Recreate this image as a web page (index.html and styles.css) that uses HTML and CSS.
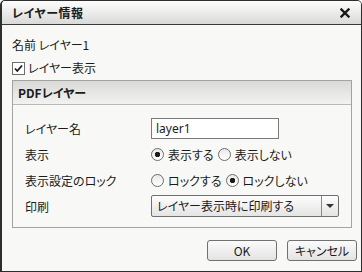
FILE: index.html
```html
<!DOCTYPE html>
<html lang="ja">
<head>
    <meta charset="UTF-8">
    <title>レイヤー情報</title>
    <link rel="stylesheet" href="styles.css">
</head>
<body>
    <div class="dialog">
        <div class="titlebar">
            <span class="title">レイヤー情報</span>
            <svg class="close" width="10" height="10" viewBox="0 0 10 10">
                <path d="M1.5 1.5 L8.5 8.5 M8.5 1.5 L1.5 8.5" stroke="#1a1a1a" stroke-width="2.4" stroke-linecap="square"/>
            </svg>
        </div>

        <div class="content">
            <div class="info-line">名前 レイヤー1</div>
            <label class="info-line check-line">
                <svg class="checkbox" width="13" height="13" viewBox="0 0 13 13">
                    <rect x="0.5" y="0.5" width="12" height="12" fill="#ffffff" stroke="#6f6f6f"/>
                    <path d="M3 6.5 L5.3 9 L10 3.5" fill="none" stroke="#1a1a1a" stroke-width="1.8"/>
                </svg>
                レイヤー表示
            </label>

            <div class="group">
                <div class="group-header">PDFレイヤー</div>
                <div class="group-body">
                    <div class="form-row">
                        <span class="form-label">レイヤー名</span>
                        <input class="text-input" type="text" value="layer1">
                    </div>
                    <div class="form-row">
                        <span class="form-label">表示</span>
                        <label class="radio-item"><span class="radio checked"></span>表示する</label>
                        <label class="radio-item"><span class="radio"></span>表示しない</label>
                    </div>
                    <div class="form-row">
                        <span class="form-label">表示設定のロック</span>
                        <label class="radio-item"><span class="radio"></span>ロックする</label>
                        <label class="radio-item"><span class="radio checked"></span>ロックしない</label>
                    </div>
                    <div class="form-row">
                        <span class="form-label">印刷</span>
                        <div class="select-box">
                            <span class="select-text">レイヤー表示時に印刷する</span>
                            <span class="select-arrow"></span>
                        </div>
                    </div>
                </div>
            </div>

            <div class="buttons">
                <button class="btn">OK</button>
                <button class="btn">キャンセル</button>
            </div>
        </div>
    </div>
</body>
</html>
```

FILE: styles.css
```css
:root {
    --text-color: #1b1b1b;
    --frame-color: #2e2e2e;
    --group-border: #a3a3a3;
    --body-bg: #f8f9f6;
}

body {
    margin: 0;
    font-family: "Noto Sans CJK JP", "Noto Sans", sans-serif;
    font-size: 12px;
    font-feature-settings: "palt";
    color: var(--text-color);
    background: #ffffff;
}

.dialog {
    width: 362px;
    height: 272px;
    box-sizing: border-box;
    border: 1px solid var(--frame-color);
    border-left-width: 2px;
    border-radius: 5px 5px 0 0;
    background: var(--body-bg);
    overflow: hidden;
}

.titlebar {
    height: 23px;
    display: flex;
    align-items: center;
    justify-content: space-between;
    padding: 0 11px 0 10px;
    background: linear-gradient(#fdfdfd, #e8e8e6 60%, #d9d9d7);
    border-bottom: 1px solid #3a3a3a;
}

.title {
    font-weight: bold;
    font-size: 12px;
    letter-spacing: 0.5px;
}

.close {
    margin-top: 1px;
}

.content {
    padding: 11px 0 0 10px;
}

.info-line {
    height: 18px;
    line-height: 18px;
    margin-bottom: 5px;
}

.check-line {
    display: flex;
    align-items: center;
    gap: 3px;
    margin-bottom: 3px;
}

.group {
    width: 340px;
    box-sizing: border-box;
    border: 1px solid var(--group-border);
}

.group-header {
    height: 23px;
    line-height: 23px;
    padding-left: 5px;
    font-weight: bold;
    background: linear-gradient(#d9d9d7, #f2f2f0);
    border-bottom: 1px solid #b9b9b7;
}

.group-body {
    padding: 10px 0 8px 12px;
}

.form-row {
    height: 26px;
    display: flex;
    align-items: center;
}

.form-label {
    width: 126px;
    flex-shrink: 0;
}

.text-input {
    width: 128px;
    height: 21px;
    box-sizing: border-box;
    border: 1px solid #7a7a7a;
    padding: 0 4px;
    font-family: "Noto Sans", "Noto Sans CJK JP", sans-serif;
    font-size: 12px;
    color: var(--text-color);
    background: #ffffff;
    outline: none;
}

.radio-item {
    display: flex;
    align-items: center;
    gap: 4px;
    margin-right: 4px;
}

.radio {
    width: 11px;
    height: 11px;
    border: 1px solid #6c6c6c;
    border-radius: 50%;
    background: linear-gradient(#e9e9e9, #ffffff);
}

.radio.checked {
    background: radial-gradient(circle, #1c1c1c 0 2.4px, transparent 3px), linear-gradient(#e9e9e9, #ffffff);
}

.select-box {
    width: 188px;
    height: 22px;
    box-sizing: border-box;
    display: flex;
    border: 1px solid #6f6f6f;
    border-radius: 2px;
    background: linear-gradient(#fdfdfd, #e4e4e4);
}

.select-text {
    flex: 1;
    line-height: 20px;
    padding-left: 5px;
}

.select-arrow {
    width: 16px;
    border-left: 1px solid #8a8a8a;
    position: relative;
}

.select-arrow::after {
    content: "";
    position: absolute;
    left: 4px;
    top: 8px;
    border-left: 4px solid transparent;
    border-right: 4px solid transparent;
    border-top: 4px solid #333333;
}

.buttons {
    display: flex;
    justify-content: flex-end;
    gap: 10px;
    margin-top: 12px;
    padding-right: 4px;
}

.btn {
    width: 70px;
    height: 21px;
    padding: 0;
    border: 1px solid #707070;
    border-radius: 3px;
    background: linear-gradient(#fbfbfb, #e3e3e3);
    font-family: "Noto Sans CJK JP", "Noto Sans", sans-serif;
    font-size: 12px;
    font-feature-settings: "palt";
    color: var(--text-color);
}
```
